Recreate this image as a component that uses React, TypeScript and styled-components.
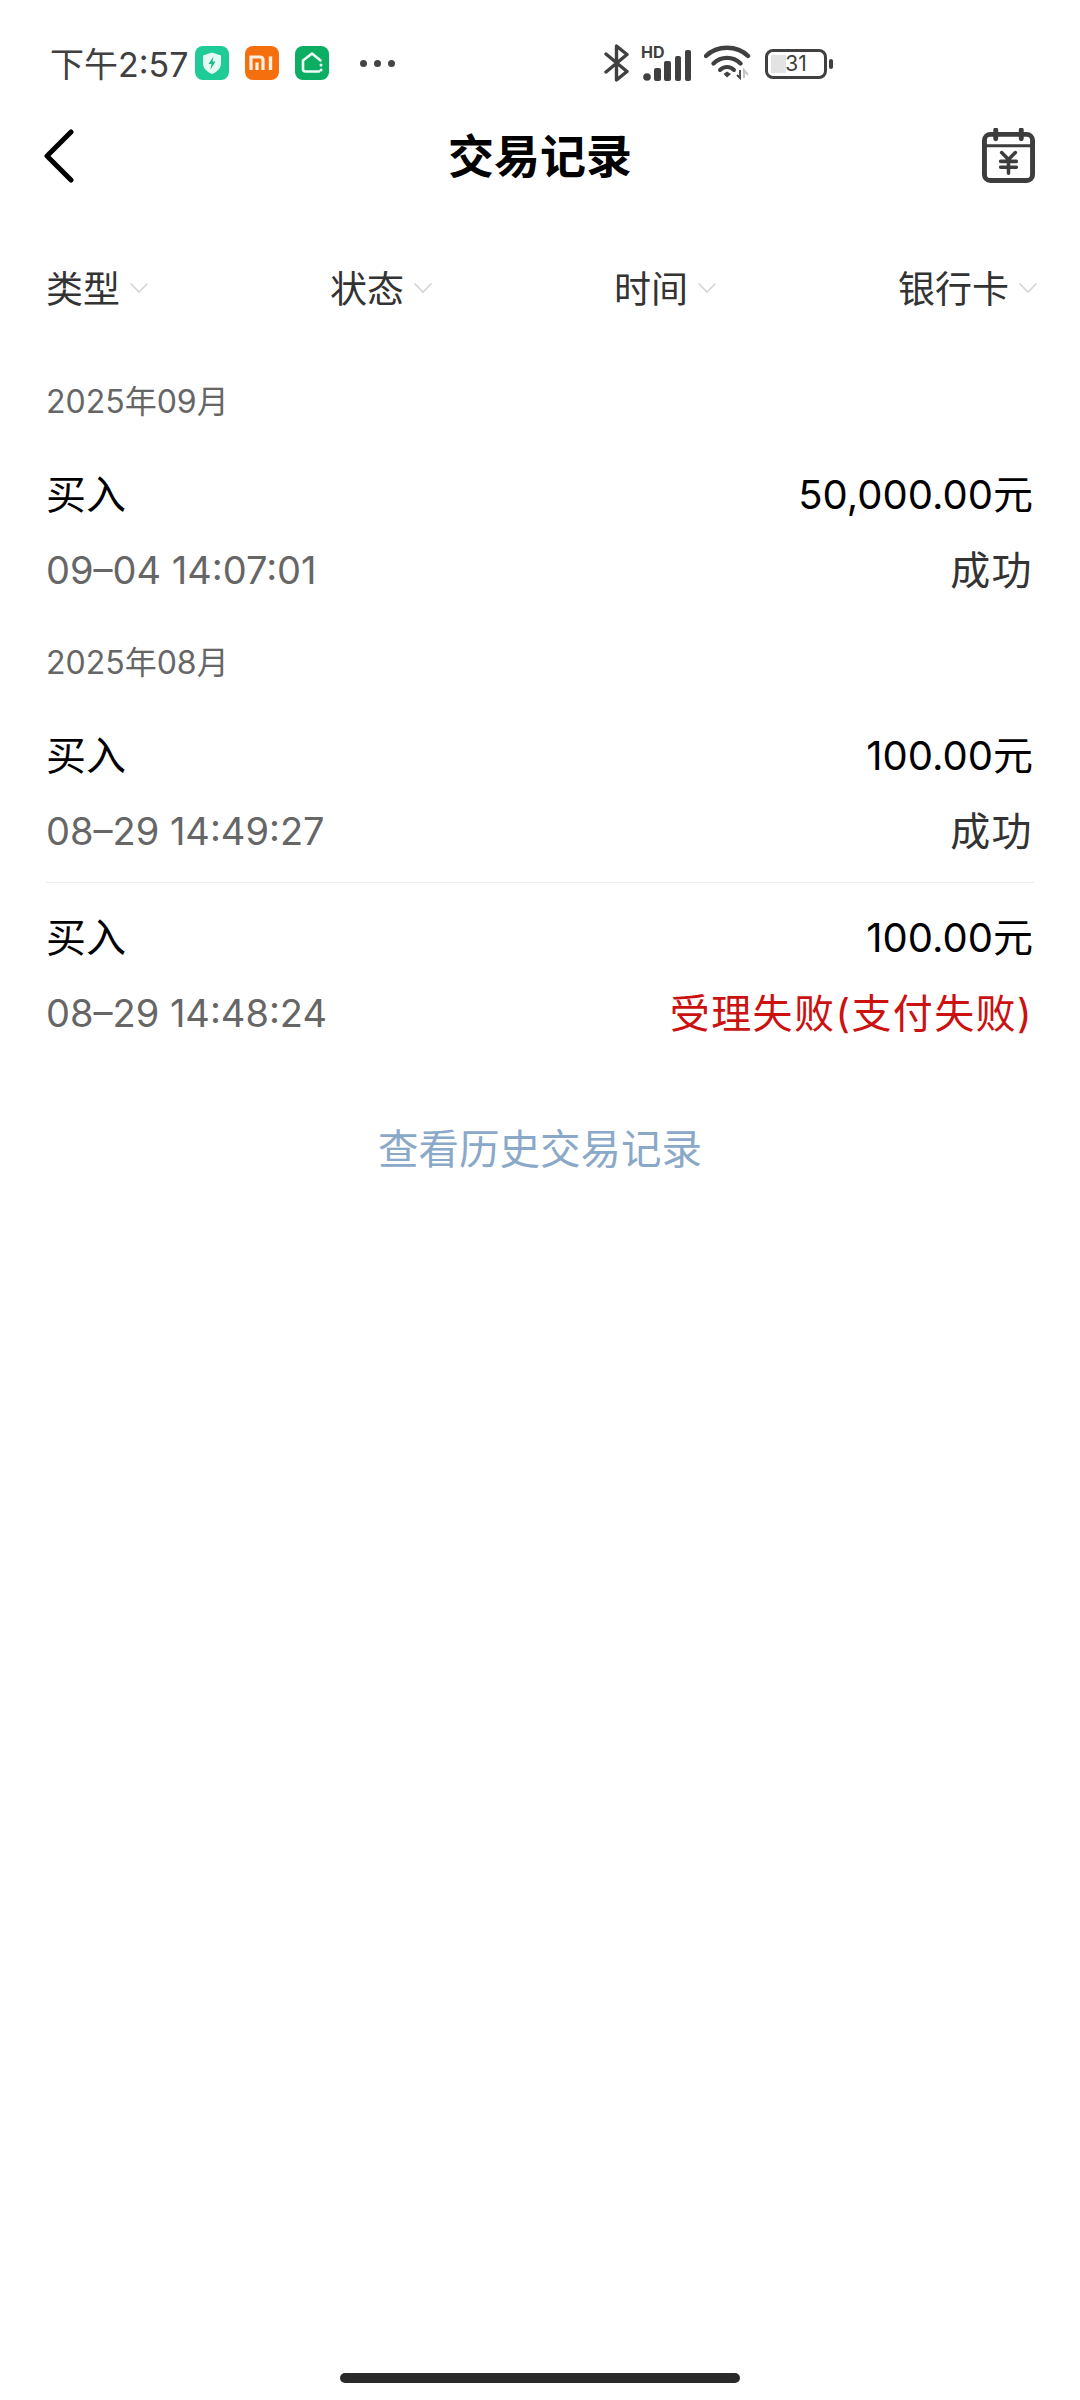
import styled, { createGlobalStyle } from 'styled-components';

const font = `Inter, 'Noto Sans CJK SC', sans-serif`;

const GlobalStyle = createGlobalStyle`
  html, body {
    margin: 0;
    padding: 0;
    background: #fff;
    font-family: ${font};
  }
`;

interface Trade {
  type: string;
  amount: string;
  time: string;
  status: string;
  failed?: boolean;
}

const groups: { month: string; trades: Trade[] }[] = [
  {
    month: '2025年09月',
    trades: [{ type: '买入', amount: '50,000.00元', time: '09–04 14:07:01', status: '成功' }],
  },
  {
    month: '2025年08月',
    trades: [
      { type: '买入', amount: '100.00元', time: '08–29 14:49:27', status: '成功' },
      { type: '买入', amount: '100.00元', time: '08–29 14:48:24', status: '受理失败(支付失败)', failed: true },
    ],
  },
];

const filters = ['类型', '状态', '时间', '银行卡'];

function Chevron() {
  return (
    <svg width="20" height="12" viewBox="0 0 20 12" fill="none">
      <path d="M1.5 1.5L10 10L18.5 1.5" stroke="#d4d4d4" strokeWidth="1.6" />
    </svg>
  );
}

function SecurityIcon() {
  return (
    <svg width="34" height="34" viewBox="0 0 34 34">
      <rect width="34" height="34" rx="8" fill="#1fcb96" />
      <path d="M17 6.5L26 9.5V17C26 22.5 22 26 17 28C12 26 8 22.5 8 17V9.5Z" fill="#e6faf4" />
      <path d="M18.5 10.5L13.5 18H16.5L15.5 23.5L20.5 15.5H17.5Z" fill="#1fb98a" />
    </svg>
  );
}

function MiIcon() {
  return (
    <svg width="34" height="34" viewBox="0 0 34 34">
      <rect width="34" height="34" rx="8" fill="#f56f0e" />
      <path
        d="M6 24V11H15C17 11 18 12 18 14V24M12 16.5V24"
        fill="none"
        stroke="#fdf0e4"
        strokeWidth="3.2"
      />
      <path d="M25.5 10.5V24" stroke="#fdf0e4" strokeWidth="3.4" />
    </svg>
  );
}

function HomeIcon() {
  return (
    <svg width="34" height="34" viewBox="0 0 34 34">
      <rect width="34" height="34" rx="8" fill="#0cae64" />
      <path
        d="M25.5 14.5L17 7.5L8 14.5V23C8 24.5 9 25.5 10.5 25.5H24"
        fill="none"
        stroke="#f0fbf5"
        strokeWidth="2.6"
        strokeLinecap="round"
        strokeLinejoin="round"
      />
      <circle cx="26" cy="19" r="1.5" fill="#f0fbf5" />
      <circle cx="26" cy="24" r="1.5" fill="#f0fbf5" />
    </svg>
  );
}

function BluetoothIcon() {
  return (
    <svg width="26" height="38" viewBox="0 0 26 38" fill="none">
      <path
        d="M2 10L23 27.5L12.5 36V2L23 10.5L2 28"
        stroke="#404040"
        strokeWidth="3.4"
        strokeLinejoin="round"
        strokeLinecap="round"
      />
    </svg>
  );
}

function SignalIcon() {
  return (
    <svg width="48" height="31" viewBox="0 0 48 31">
      <circle cx="4" cy="27" r="3.8" fill="#404040" />
      <rect x="11" y="18" width="7" height="13" rx="2" fill="#404040" />
      <rect x="21" y="11" width="7" height="20" rx="2" fill="#404040" />
      <rect x="32" y="6" width="6" height="25" rx="2" fill="#404040" />
      <rect x="42" y="0" width="6" height="31" rx="2" fill="#404040" />
    </svg>
  );
}

function WifiIcon() {
  return (
    <svg width="48" height="36" viewBox="0 0 48 36" fill="none">
      <path d="M2 11C13 0 33 0 44 11" stroke="#404040" strokeWidth="4.4" strokeLinecap="round" />
      <path d="M9.5 18.5C17 11 29 11 36.5 18.5" stroke="#404040" strokeWidth="4.4" strokeLinecap="round" />
      <path d="M16 25C20 21 26 21 30 25" stroke="#404040" strokeWidth="4" strokeLinecap="round" />
      <path d="M19.5 29L23 26.5L27 29L23 32.5Z" fill="#404040" />
      <path d="M36 25V33L33 30" stroke="#404040" strokeWidth="1.8" />
      <path d="M40 33V25L44 30" stroke="#c4c4c4" strokeWidth="2" />
    </svg>
  );
}

function CalendarIcon() {
  return (
    <svg width="53" height="55" viewBox="0 0 54 56" fill="none">
      <rect x="2.5" y="6.5" width="49" height="47" rx="6" stroke="#3d3d3d" strokeWidth="5" />
      <path d="M2 18H52" stroke="#3d3d3d" strokeWidth="3" />
      <path d="M14 2V11M40 2V11" stroke="#3d3d3d" strokeWidth="5" strokeLinecap="round" />
      <path
        d="M20 25L27 32L34 25M19 34H35M19 40H35M27 32V46"
        stroke="#3d3d3d"
        strokeWidth="3.6"
        strokeLinecap="round"
      />
    </svg>
  );
}

export default function App() {
  return (
    <Page>
      <GlobalStyle />
      <StatusBar>
        <StatusLeft>
          <Clock>下午2:57</Clock>
          <AppIcons>
            <SecurityIcon />
            <MiIcon />
            <HomeIcon />
          </AppIcons>
          <MoreDots>
            <Dot />
            <Dot />
            <Dot />
          </MoreDots>
        </StatusLeft>
        <StatusRight>
          <BluetoothIcon />
          <SignalWrap>
            <HdLabel>HD</HdLabel>
            <SignalIcon />
          </SignalWrap>
          <WifiIcon />
          <Battery>
            <BatteryBody>
              <BatteryFill />
              <BatteryText>31</BatteryText>
            </BatteryBody>
            <BatteryNub />
          </Battery>
        </StatusRight>
      </StatusBar>

      <NavBar>
        <svg width="32" height="54" viewBox="0 0 32 54" fill="none">
          <path
            d="M28 3L4 27L28 51"
            stroke="#000"
            strokeWidth="5"
            strokeLinecap="round"
            strokeLinejoin="round"
          />
        </svg>
        <Title>交易记录</Title>
        <CalendarIcon />
      </NavBar>

      <FilterBar>
        {filters.map((label) => (
          <FilterItem key={label}>
            <FilterLabel>{label}</FilterLabel>
            <Chevron />
          </FilterItem>
        ))}
      </FilterBar>

      {groups.map((group) => (
        <Group key={group.month}>
          <MonthLabel>{group.month}</MonthLabel>
          {group.trades.map((trade) => (
            <TradeRow key={trade.time}>
              <TradeLine>
                <PrimaryText>{trade.type}</PrimaryText>
                <PrimaryText>{trade.amount}</PrimaryText>
              </TradeLine>
              <TradeLine>
                <TimeText>{trade.time}</TimeText>
                <StatusText $failed={trade.failed}>{trade.status}</StatusText>
              </TradeLine>
            </TradeRow>
          ))}
        </Group>
      ))}

      <HistoryLink>查看历史交易记录</HistoryLink>
      <HomeIndicator />
    </Page>
  );
}

const Page = styled.div`
  width: 1080px;
  min-height: 2400px;
  display: flex;
  flex-direction: column;
  background: #fff;
`;

const StatusBar = styled.div`
  height: 110px;
  padding: 16px 247px 0 50px;
  box-sizing: border-box;
  display: flex;
  align-items: center;
  justify-content: space-between;
`;

const StatusLeft = styled.div`
  display: flex;
  align-items: center;
`;

const Clock = styled.div`
  font-size: 34px;
  line-height: 40px;
  padding-top: 3px;
  color: #404040;
  width: 145px;
  white-space: nowrap;
`;

const AppIcons = styled.div`
  display: flex;
  gap: 16px;
  svg {
    display: block;
  }
`;

const MoreDots = styled.div`
  display: flex;
  gap: 7px;
  margin-left: 31px;
`;

const Dot = styled.span`
  width: 7px;
  height: 7px;
  border-radius: 50%;
  background: #444;
`;

const StatusRight = styled.div`
  display: flex;
  align-items: center;
  gap: 13px;
  svg {
    display: block;
    flex: none;
  }
`;

const SignalWrap = styled.div`
  position: relative;
  padding-top: 4px;
`;

const HdLabel = styled.span`
  position: absolute;
  left: -2px;
  top: -1px;
  font-size: 16px;
  line-height: 15px;
  font-weight: 700;
  color: #404040;
`;

const Battery = styled.div`
  display: flex;
  align-items: center;
  gap: 2px;
  margin-top: 1px;
`;

const BatteryBody = styled.div`
  position: relative;
  width: 62px;
  height: 30px;
  box-sizing: border-box;
  border: 3.5px solid #404040;
  border-radius: 8px;
`;

const BatteryFill = styled.div`
  position: absolute;
  left: 3px;
  top: 3px;
  bottom: 3px;
  width: 15px;
  background: #e3e3e3;
`;

const BatteryText = styled.span`
  position: absolute;
  inset: 0;
  text-align: center;
  font-size: 21px;
  line-height: 23px;
  color: #404040;
`;

const BatteryNub = styled.div`
  width: 4px;
  height: 10px;
  border-radius: 2px;
  background: #404040;
`;

const NavBar = styled.div`
  height: 94px;
  padding: 0 45px 3px 43px;
  box-sizing: border-box;
  display: flex;
  align-items: center;
  justify-content: space-between;
  position: relative;
  svg {
    display: block;
  }
`;

const Title = styled.h1`
  position: absolute;
  left: 0;
  right: 0;
  margin: 0;
  text-align: center;
  font-size: 46px;
  line-height: 60px;
  font-weight: 700;
  color: #000;
`;

const FilterBar = styled.div`
  height: 168px;
  padding: 0 42px 0 46px;
  display: flex;
  align-items: center;
  justify-content: space-between;
`;

const FilterItem = styled.div`
  display: flex;
  align-items: center;
  gap: 9px;
`;

const FilterLabel = styled.span`
  font-size: 37px;
  line-height: 48px;
  padding-top: 3px;
  color: #333;
`;

const Group = styled.section`
  padding: 0 46px;
  & + & {
    margin-top: 12px;
  }
`;

const MonthLabel = styled.div`
  height: 56px;
  margin-bottom: 12px;
  font-size: 32px;
  line-height: 59px;
  color: #666;
`;

const TradeRow = styled.div`
  padding: 24px 0 23px;
  display: flex;
  flex-direction: column;
  gap: 18px;
  & + & {
    border-top: 1px solid #ededed;
  }
`;

const TradeLine = styled.div`
  height: 58px;
  padding: 3px 1px 0 0;
  box-sizing: border-box;
  display: flex;
  align-items: center;
  justify-content: space-between;
`;

const PrimaryText = styled.span`
  font-size: 40px;
  line-height: 55px;
  color: #000;
`;

const TimeText = styled.span`
  font-size: 38px;
  line-height: 55px;
  color: #666;
`;

const StatusText = styled.span<{ $failed?: boolean }>`
  font-size: 40px;
  line-height: 55px;
  letter-spacing: 1.4px;
  color: ${({ $failed }) => ($failed ? '#cc1111' : '#333')};
`;

const HistoryLink = styled.div`
  margin-top: 53px;
  padding-top: 3px;
  text-align: center;
  font-size: 40.5px;
  line-height: 60px;
  color: #8aa8c8;
`;

const HomeIndicator = styled.div`
  width: 400px;
  height: 10px;
  margin: auto auto 17px;
  border-radius: 5px;
  background: #2a2a2a;
`;
